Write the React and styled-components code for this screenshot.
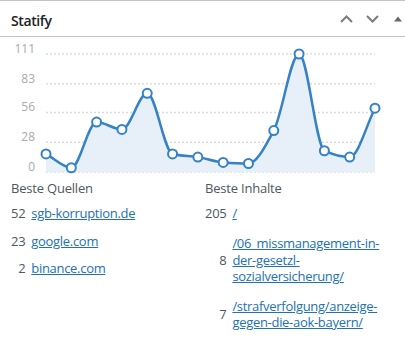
import React from "react";
import styled, { createGlobalStyle } from "styled-components";

const GlobalStyle = createGlobalStyle`
  body {
    margin: 0;
    background: #fff;
    font-family: "Open Sans", "Noto Sans", sans-serif;
    color: #50575e;
  }
`;

const Widget = styled.div`
  width: 405px;
  background: #fff;
`;

const Header = styled.div`
  display: flex;
  align-items: center;
  height: 35px;
  border-top: 1px solid #c3c4c7;
  border-bottom: 1px solid #c3c4c7;
  padding-left: 11px;
`;

const Title = styled.h2`
  flex: 1;
  margin: 0;
  padding-top: 4px;
  font-size: 14px;
  font-weight: 600;
  letter-spacing: -0.4px;
  color: #1d2327;
`;

const Actions = styled.div`
  display: flex;
  align-items: center;
  gap: 13px;
  padding-right: 3px;
`;

const IconButton = styled.span`
  display: flex;
  align-items: center;
  justify-content: center;
  color: ${(p) => p.$color || "#787c82"};
  margin-left: ${(p) => p.$shift || 0}px;
`;

const Chart = styled.svg`
  display: block;
  width: 405px;
  height: 141px;
`;

const Lists = styled.div`
  display: grid;
  grid-template-columns: 194px 1fr;
  padding: 0 11px;
`;

const Column = styled.div`
  display: flex;
  flex-direction: column;
`;

const Heading = styled.div`
  font-size: 13px;
  line-height: 20px;
  letter-spacing: -0.2px;
  color: #50575e;
`;

const Table = styled.table`
  border-collapse: collapse;
  margin-top: 1.5px;
  font-size: 13px;
  line-height: 16.5px;
  letter-spacing: -0.3px;
`;

const Count = styled.td`
  width: 1%;
  padding: ${(p) => (p.$extra ? "8px 6px 7.5px 0" : "5.5px 6px 5.5px 0")};
  text-align: right;
  white-space: nowrap;
  vertical-align: middle;
  color: #50575e;
`;

const Target = styled.td`
  padding: ${(p) => (p.$extra ? "8px 0 7.5px 0" : "5.5px 0")};
  vertical-align: middle;
  max-width: ${(p) => p.$max || "none"};
`;

const Link = styled.a`
  color: #2271b1;
  text-decoration: underline;
`;

const Chevron = ({ up }) => (
  <svg width="13" height="8" viewBox="0 0 13 8">
    <path
      d={up ? "M1 7 L6.5 1.5 L12 7" : "M1 1 L6.5 6.5 L12 1"}
      fill="none"
      stroke="currentColor"
      strokeWidth="2"
    />
  </svg>
);

const Triangle = () => (
  <svg width="8" height="6" viewBox="0 0 8 6">
    <path d="M0 5.5 L4 0.5 L8 5.5 Z" fill="currentColor" />
  </svg>
);

const values = [17, 4, 47, 40, 74, 17, 14, 9, 8, 39, 111, 20, 14, 60];
const ticks = [0, 28, 56, 83, 111];
const top = 37;
const x0 = 46;
const x1 = 375;
const yOf = (v) => 172 - top - (v * 118) / 111;
const xOf = (i) => x0 + ((x1 - x0) * i) / (values.length - 1);

// monotone cubic smoothing, flat at local peaks and dips
const buildLine = (pts) => {
  const n = pts.length;
  const dxs = [];
  const ds = [];
  for (let i = 0; i < n - 1; i++) {
    dxs[i] = pts[i + 1][0] - pts[i][0];
    ds[i] = (pts[i + 1][1] - pts[i][1]) / dxs[i];
  }
  const ms = [ds[0]];
  for (let i = 1; i < n - 1; i++) {
    if (ds[i] === 0 || ds[i - 1] === 0 || ds[i - 1] > 0 !== ds[i] > 0) {
      ms[i] = 0;
    } else {
      ms[i] =
        (3 * (dxs[i - 1] + dxs[i])) /
        ((2 * dxs[i] + dxs[i - 1]) / ds[i - 1] + (dxs[i] + 2 * dxs[i - 1]) / ds[i]);
    }
  }
  ms[n - 1] = ds[n - 2];

  let d = `M${pts[0][0]},${pts[0][1]}`;
  for (let i = 0; i < n - 1; i++) {
    const h = dxs[i] / 3;
    d += ` C${pts[i][0] + h},${pts[i][1] + ms[i] * h} ${pts[i + 1][0] - h},${
      pts[i + 1][1] - ms[i + 1] * h
    } ${pts[i + 1][0]},${pts[i + 1][1]}`;
  }
  return d;
};

const sources = [
  { count: 52, label: "sgb-korruption.de" },
  { count: 23, label: "google.com" },
  { count: 2, label: "binance.com" },
];

const contents = [
  { count: 205, label: "/" },
  { count: 8, label: "/06_missmanagement-in-der-gesetzl-sozialversicherung/", extra: true },
  { count: 7, label: "/strafverfolgung/anzeige-gegen-die-aok-bayern/" },
];

const StatsChart = () => {
  const pts = values.map((v, i) => [xOf(i), yOf(v)]);
  const line = buildLine(pts);
  const base = yOf(0);
  const area = `${line} L${x1},${base} L${x0},${base} Z`;

  return (
    <Chart viewBox="0 0 405 141">
      {ticks.map((t) => (
        <g key={t}>
          <line
            x1={x0}
            x2={x1}
            y1={yOf(t)}
            y2={yOf(t)}
            stroke="#dcdcde"
            strokeWidth="1.5"
            strokeDasharray="2 2"
          />
          <text
            x="35"
            y={yOf(t) - 1}
            textAnchor="end"
            fontSize="12"
            fill="#a7aaad"
            fontFamily="Open Sans, sans-serif"
          >
            {t}
          </text>
        </g>
      ))}
      <path d={area} fill="#e7eff8" />
      <path d={line} fill="none" stroke="#3582c4" strokeWidth="2.5" />
      {pts.map(([x, y], i) => (
        <circle key={i} cx={x} cy={y} r="4.5" fill="#fff" stroke="#3582c4" strokeWidth="2" />
      ))}
    </Chart>
  );
};

const App = () => (
  <Widget>
    <GlobalStyle />
    <Header>
      <Title>Statify</Title>
      <Actions>
        <IconButton>
          <Chevron up />
        </IconButton>
        <IconButton>
          <Chevron />
        </IconButton>
        <IconButton $color="#646970" $shift={2}>
          <Triangle />
        </IconButton>
      </Actions>
    </Header>
    <StatsChart />
    <Lists>
      <Column>
        <Heading>Beste Quellen</Heading>
        <Table>
          <tbody>
            {sources.map((s) => (
              <tr key={s.label}>
                <Count>{s.count}</Count>
                <Target>
                  <Link href="#">{s.label}</Link>
                </Target>
              </tr>
            ))}
          </tbody>
        </Table>
      </Column>
      <Column>
        <Heading>Beste Inhalte</Heading>
        <Table>
          <tbody>
            {contents.map((c) => (
              <tr key={c.label}>
                <Count $extra={c.extra}>{c.count}</Count>
                <Target $extra={c.extra} $max="155px">
                  <Link href="#">{c.label}</Link>
                </Target>
              </tr>
            ))}
          </tbody>
        </Table>
      </Column>
    </Lists>
  </Widget>
);

export default App;
